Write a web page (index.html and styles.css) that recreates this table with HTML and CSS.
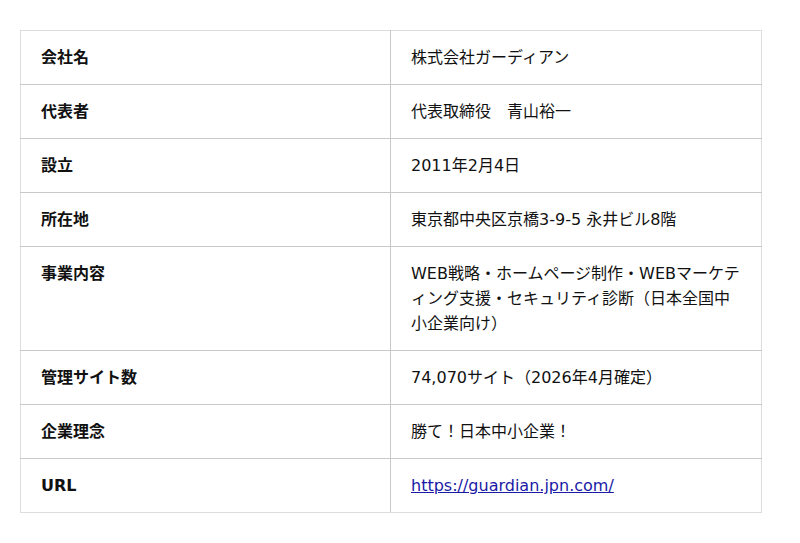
FILE: index.html
```html
<!DOCTYPE html>
<html lang="ja">
<head>
<meta charset="utf-8">
<link rel="stylesheet" href="styles.css">
</head>
<body>
<table class="info">
  <tr><th>会社名</th><td>株式会社ガーディアン</td></tr>
  <tr><th>代表者</th><td>代表取締役　青山裕一</td></tr>
  <tr><th>設立</th><td>2011年2月4日</td></tr>
  <tr><th>所在地</th><td>東京都中央区京橋3-9-5 永井ビル8階</td></tr>
  <tr><th>事業内容</th><td>WEB戦略・ホームページ制作・WEBマーケティング支援・セキュリティ診断（日本全国中小企業向け）</td></tr>
  <tr><th>管理サイト数</th><td>74,070サイト（2026年4月確定）</td></tr>
  <tr><th>企業理念</th><td>勝て！日本中小企業！</td></tr>
  <tr><th>URL</th><td><a href="https://guardian.jpn.com/">https://guardian.jpn.com/</a></td></tr>
</table>
</body>
</html>
```
FILE: styles.css
```css
html, body {
  margin: 0;
  padding: 0;
  background: #fff;
}
body {
  padding: 30px 20px;
  font-family: "DejaVu Sans", "Noto Sans CJK JP", sans-serif;
  font-size: 16px;
  color: #111;
}
.info {
  width: 742px;
  border-collapse: collapse;
  border: 1px solid #ddd;
  table-layout: fixed;
}
.info th, .info td {
  padding: 14px 20px;
  line-height: 25px;
  text-align: left;
  vertical-align: top;
  border-bottom: 1px solid #c8c8c8;
}
.info th {
  width: 329px;
  font-weight: bold;
  border-right: 1px solid #c8c8c8;
}
.info tr:last-child th, .info tr:last-child td {
  border-bottom: 1px solid #ddd;
}
.info a {
  color: #1a1aa6;
}
```
